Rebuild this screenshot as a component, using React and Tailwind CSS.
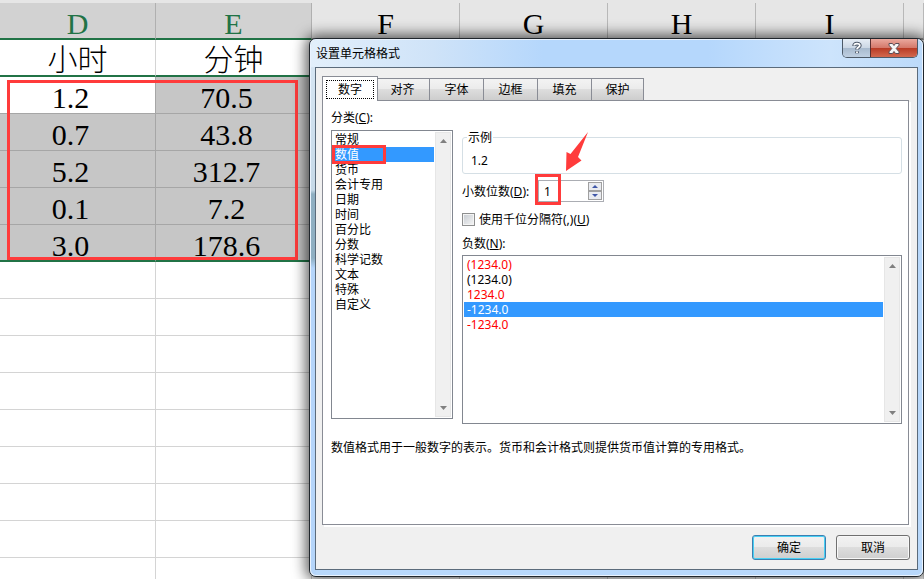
import React, { useState } from "react";

const tabs = ["数字", "对齐", "字体", "边框", "填充", "保护"];

const categories = [
  "常规",
  "数值",
  "货币",
  "会计专用",
  "日期",
  "时间",
  "百分比",
  "分数",
  "科学记数",
  "文本",
  "特殊",
  "自定义",
];

const negatives = [
  { text: "(1234.0)", red: true },
  { text: "(1234.0)", red: false },
  { text: "1234.0", red: true },
  { text: "-1234.0", red: false },
  { text: "-1234.0", red: true },
];

const rows = [
  ["1.2", "70.5"],
  ["0.7", "43.8"],
  ["5.2", "312.7"],
  ["0.1", "7.2"],
  ["3.0", "178.6"],
];

const Sheet = () => {
  return (
    <table className="w-full table-fixed border-separate border-spacing-0 text-center text-[30px] leading-7 font-light font-['Liberation_Serif','Noto_Sans_CJK_SC',serif]">
      <colgroup>
        <col className="w-[156px]" />
        <col className="w-[156px]" />
        <col className="w-[148px]" />
        <col className="w-[148px]" />
        <col className="w-[148px]" />
        <col className="w-[148px]" />
        <col />
      </colgroup>
      <thead>
        <tr className="h-[37px]">
          {["D", "E"].map((name) => (
            <th
              key={name}
              className="p-0 pt-1.5 font-normal text-[#217346] bg-[#d2d2d2] border-r border-[#b0b0b0] border-b-2 border-b-[#217346]"
            >
              {name}
            </th>
          ))}
          {["F", "G", "H", "I", ""].map((name) => (
            <th
              key={name}
              className="p-0 pt-1.5 font-normal bg-[#e6e6e6] border-r border-[#b8b8b8] border-b-2 border-b-[#9a9a9a]"
            >
              {name}
            </th>
          ))}
        </tr>
      </thead>
      <tbody>
        <tr className="h-[37px]">
          {["小时", "分钟"].map((name) => (
            <td
              key={name}
              className="p-0 pt-1 border-r border-[#d4d4d4] border-b-2 border-b-[#217346]"
            >
              {name}
            </td>
          ))}
          <td colSpan={5} className="border-b border-[#d4d4d4]"></td>
        </tr>
        {rows.map((row, i) => (
          <tr key={i} className="h-[37px]">
            {row.map((value, j) => (
              <td
                key={j}
                className={`p-0 pt-1.5 pr-3.5 border-r border-[#a6a6a6] ${
                  i === 0 && j === 0 ? "bg-white" : "bg-[#c6c6c6]"
                } ${
                  i === rows.length - 1
                    ? "border-b-2 border-b-[#217346]"
                    : "border-b"
                }`}
              >
                {value}
              </td>
            ))}
            <td colSpan={5} className="border-b border-[#d4d4d4]"></td>
          </tr>
        ))}
        {Array(9)
          .fill(0)
          .map((_, i) => (
            <tr key={i} className="h-[37px]">
              {Array(7)
                .fill(0)
                .map((_, j) => (
                  <td key={j} className="p-0 border-r border-b border-[#d4d4d4]"></td>
                ))}
            </tr>
          ))}
      </tbody>
    </table>
  );
};

const ScrollBar = () => {
  return (
    <div className="w-4 shrink-0 flex flex-col justify-between items-center py-1 bg-[#f0f0f0] border border-[#e6e6e6]">
      <svg width="7" height="8" viewBox="0 0 7 8">
        <path d="M0 6L3.5 2L7 6Z" fill="#808080" />
      </svg>
      <svg width="7" height="8" viewBox="0 0 7 8">
        <path d="M0 2L3.5 6L7 2Z" fill="#808080" />
      </svg>
    </div>
  );
};

const App = () => {
  const [tab, setTab] = useState(0);
  const [category, setCategory] = useState(1);
  const [negative, setNegative] = useState(3);
  const [decimals, setDecimals] = useState(1);
  const [separator, setSeparator] = useState(false);

  return (
    <div className="relative h-screen overflow-hidden bg-white text-black">
      <div className="h-[3px] bg-[#e6e6e6]"></div>
      <Sheet />
      {/* red frame round the selected numbers */}
      <div className="absolute left-[7px] top-20 w-[291px] h-[180px] border-3 border-[#ff3b3b]"></div>

      {/* format cells dialog */}
      <div
        role="dialog"
        aria-labelledby="dialog-title"
        className="absolute left-[309px] right-0 top-[38px] rounded-[7px] border border-[#20262c] bg-[#b8d8fb] shadow-[0_0_14px_3px_rgba(0,0,0,0.65)] text-xs leading-[15px] font-['Noto_Sans','Noto_Sans_CJK_SC',sans-serif]"
      >
        <div className="rounded-md border border-white/70 bg-[linear-gradient(to_bottom,#d9e8f5_0px,#c6d9e8_150px,#8fafc2_154px,#8fafc2_218px,#b5d5fa_228px)] bg-[length:5px_100%] bg-no-repeat px-1 pb-[5px]">
          <div className="flex justify-between h-[27px] -mx-1 pl-[5px] pr-1 rounded-t-md bg-[linear-gradient(to_right,#e2effb,#cfe3f8_20%,#b5d7fc_38%,#b5d7fc_65%,#cde4fc_85%,#bcdafa)]">
            <h1 id="dialog-title" className="pt-1.5">
              设置单元格格式
            </h1>
            <div className="flex h-[19px] -mt-px rounded-b-[5px] border border-t-0 border-[#4d5a68] overflow-hidden">
              <button
                aria-label="帮助"
                className="w-7 flex items-center justify-center border-r border-[#5c3030] bg-[linear-gradient(#e6edf5,#ccd8e5_48%,#a7b9cd_50%,#bfd0e2)]"
              >
                <svg width="12" height="14" viewBox="0 0 12 14" fill="none">
                  <path
                    d="M3.200 5C3.200 1.800 8.800 1.800 8.800 4.500C8.800 6.300 6 6.300 6 8.500M6 10.300V12.300"
                    stroke="#505b6b"
                    strokeWidth="3.800"
                  />
                  <path
                    d="M3.200 4.600C3.200 1.900 8.800 1.900 8.800 4.500C8.800 6.300 6 6.300 6 8.300M6 10.500V12"
                    stroke="#fff"
                    strokeWidth="1.800"
                  />
                </svg>
              </button>
              <button
                aria-label="关闭"
                className="w-[46px] flex items-center justify-center bg-[linear-gradient(#eaa99e,#d5796b_48%,#b83a24_50%,#d3694f)]"
              >
                <svg width="12" height="11" viewBox="0 0 12 11">
                  <path
                    d="M1 .5H4.500L6 2.500L7.500 .5H11V2.200L8.200 5.500L11 8.800V10.500H7.500L6 8.500L4.500 10.500H1V8.800L3.800 5.500L1 2.200Z"
                    fill="#f6f6f6"
                    stroke="#5a4c55"
                  />
                </svg>
              </button>
            </div>
          </div>

          <div className="border border-[#5b6b7b] bg-[#f0f0f0] pt-2 pl-1.5 pr-2 pb-[9px]">
            <div role="tablist" className="flex items-end h-6">
              {tabs.map((name, i) => (
                <button
                  key={name}
                  role="tab"
                  aria-selected={tab === i}
                  onClick={() => setTab(i)}
                  className={
                    tab === i
                      ? "relative z-10 w-14 h-[25px] -mb-px -mr-0.5 p-[3px] shrink-0 bg-white border border-b-0 border-[#898c95]"
                      : "w-[54px] last:w-[52px] h-[22px] border border-b-0 border-l-0 border-[#898c95] bg-[linear-gradient(#f3f3f3,#ebebeb_48%,#dddddd_50%,#cdcdcd)]"
                  }
                >
                  <span
                    className={
                      tab === i
                        ? "block h-[19px] leading-[17px] border border-dotted border-black"
                        : "block"
                    }
                  >
                    {name}
                  </span>
                </button>
              ))}
            </div>

            <div className="h-[425px] bg-white border border-[#898c95] pt-[9px] pl-2 pr-1.5 shadow-[2px_2px_0_white]">
              <div className="flex gap-[9px]">
                <div className="w-[122px] shrink-0">
                  <div id="category-label" className="h-5">
                    分类(<u>C</u>):
                  </div>
                  <div className="relative flex h-[289px] border border-[#828790] p-px">
                    <ul role="listbox" aria-labelledby="category-label" className="grow">
                      {categories.map((name, i) => (
                        <li
                          key={name}
                          role="option"
                          aria-selected={category === i}
                          onClick={() => setCategory(i)}
                          className={`h-[15px] mr-px pl-0.5 ${
                            category === i ? "bg-[#3399ff] text-white" : ""
                          }`}
                        >
                          {name}
                        </li>
                      ))}
                    </ul>
                    <ScrollBar />
                    <div className="absolute left-0 top-3.5 w-[54px] h-[19px] border-3 border-[#ff3b3b]"></div>
                  </div>
                </div>

                <div className="grow pt-5">
                  <fieldset className="h-11 min-w-0 rounded-[3px] border border-[#d5dfe5] pl-2">
                    <legend className="-ml-1 px-px">示例</legend>
                    <p className="pt-2">1.2</p>
                  </fieldset>
                  <div className="relative flex items-center h-[22px] mt-1.5">
                    <label htmlFor="decimals" className="w-[76px]">
                      小数位数(<u>D</u>):
                    </label>
                    <div className="flex w-[66px] h-[22px] p-px border border-[#abadb3]">
                      <input
                        id="decimals"
                        value={decimals}
                        onChange={(e) => setDecimals(Number(e.target.value) || 0)}
                        className="w-12 pl-1 outline-none"
                      />
                      <div className="flex flex-col w-4 justify-between">
                        <button
                          aria-label="增加"
                          onClick={() => setDecimals(decimals + 1)}
                          className="h-[9px] flex items-center justify-center border border-[#a0a0a0] bg-[#e9ebf0]"
                        >
                          <svg width="6" height="3" viewBox="0 0 6 3">
                            <path d="M0 3L3 0L6 3Z" fill="#3f57a8" />
                          </svg>
                        </button>
                        <button
                          aria-label="减少"
                          onClick={() => setDecimals(Math.max(0, decimals - 1))}
                          className="h-[9px] flex items-center justify-center border border-[#a0a0a0] bg-[#e9ebf0]"
                        >
                          <svg width="6" height="3" viewBox="0 0 6 3">
                            <path d="M0 0L3 3L6 0Z" fill="#3f57a8" />
                          </svg>
                        </button>
                      </div>
                    </div>
                    <div className="absolute left-[73px] -top-1.5 w-[26px] h-[31px] border-3 border-[#ff3b3b]"></div>
                    <svg
                      width="24"
                      height="40"
                      viewBox="0 0 24 40"
                      className="absolute left-[103px] -top-12"
                    >
                      <path d="M1 39L1.500 20L5.500 22L23 0L13 25L16.500 28.500Z" fill="#ff3b3b" />
                    </svg>
                  </div>
                  <div className="flex items-center gap-1 h-4 mt-[9px]">
                    <input
                      id="separator"
                      type="checkbox"
                      checked={separator}
                      onChange={(e) => setSeparator(e.target.checked)}
                      className="appearance-none w-[13px] h-[13px] border border-[#8e8f8f] bg-[linear-gradient(135deg,#c5cad0,#f6f6f6)] shadow-[inset_0_0_0_1px_#f4f4f4] checked:bg-[#3399ff]"
                    />
                    <label htmlFor="separator">
                      使用千位分隔符(,)(<u>U</u>)
                    </label>
                  </div>
                  <div id="negative-label" className="h-[19px] mt-[9px]">
                    负数(<u>N</u>):
                  </div>
                  <div className="flex h-[169px] border border-[#828790] p-px">
                    <ul role="listbox" aria-labelledby="negative-label" className="grow">
                      {negatives.map((item, i) => (
                        <li
                          key={i}
                          role="option"
                          aria-selected={negative === i}
                          onClick={() => setNegative(i)}
                          className={`h-[15px] mr-px pl-[3px] ${
                            negative === i
                              ? "bg-[#3399ff] text-white"
                              : item.red
                                ? "text-[#ff0000]"
                                : ""
                          }`}
                        >
                          {item.text}
                        </li>
                      ))}
                    </ul>
                    <ScrollBar />
                  </div>
                </div>
              </div>
              <p className="mt-4">
                数值格式用于一般数字的表示。货币和会计格式则提供货币值计算的专用格式。
              </p>
            </div>

            <div className="flex justify-end gap-2.5 -mr-px mt-2.5">
              <button className="w-[74px] h-[25px] rounded-[3px] border border-[#3c7fb1] shadow-[inset_0_0_0_1px_#48d0f4] bg-[linear-gradient(#f2f2f2,#ebebeb_48%,#dddddd_50%,#cfcfcf)]">
                确定
              </button>
              <button className="w-[74px] h-[25px] rounded-[3px] border border-[#707070] shadow-[inset_0_0_0_1px_#f8f8f8] bg-[linear-gradient(#f2f2f2,#ebebeb_48%,#dddddd_50%,#cfcfcf)]">
                取消
              </button>
            </div>
          </div>
        </div>
      </div>
    </div>
  );
};

export default App;
